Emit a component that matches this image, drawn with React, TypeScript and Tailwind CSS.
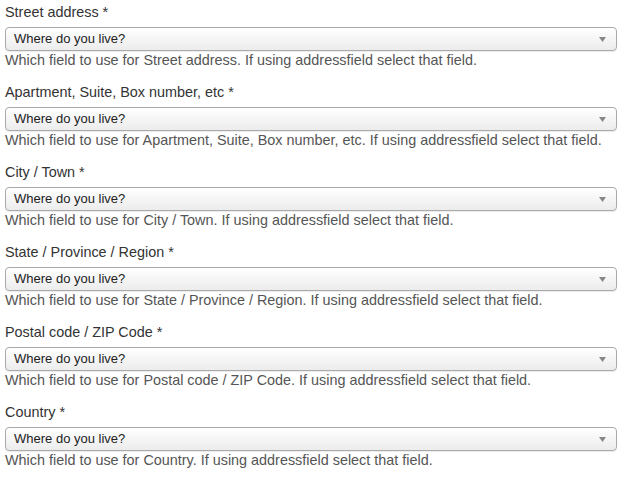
import React from 'react'

const fields = [
  'Street address',
  'Apartment, Suite, Box number, etc',
  'City / Town',
  'State / Province / Region',
  'Postal code / ZIP Code',
  'Country',
]

function SelectBox() {
  return (
    <div className="relative h-[24px] rounded-[4px] border border-[#aaaaaa] bg-gradient-to-b from-white to-[#ececec] shadow-[0_1px_1px_rgba(0,0,0,0.08)]">
      <span className="absolute left-[8px] top-[3px] text-[13px] leading-[16px] text-[#222]">Where do you live?</span>
      <svg width="7" height="5" viewBox="0 0 7 5" className="absolute right-[10px] top-[9px]">
        <path d="M0 0h7L3.5 5z" fill="#888" />
      </svg>
    </div>
  )
}

export default function App() {
  return (
    <div className="w-[622px] h-[478px] bg-white px-[5px] pt-[3px] font-['Liberation_Sans',Arial,sans-serif]">
      {fields.map((f) => (
        <div key={f} className="h-[80px]">
          <div className="text-[14.4px] leading-[18px] text-[#333]">{f} *</div>
          <div className="mt-[6px]">
            <SelectBox />
          </div>
          <div className="text-[14.4px] leading-[19px] text-[#555]">
            Which field to use for {f}. If using addressfield select that field.
          </div>
        </div>
      ))}
    </div>
  )
}
